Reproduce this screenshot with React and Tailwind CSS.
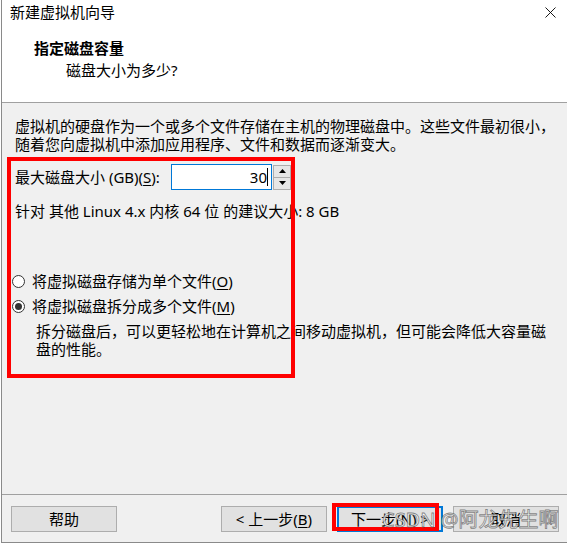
export default function App() {
  return (
    <div className="relative w-[567px] h-[545px] overflow-hidden bg-white text-[15px] text-black font-['Noto_Sans','Noto_Sans_CJK_SC',sans-serif]">
      <div className="ml-px h-[543px] flex flex-col border-l border-b border-[#8a8a8a]">
        {/* title bar */}
        <div className="h-[24px] flex items-center justify-between pl-[8px] pr-[11px] bg-white">
          <span className="leading-[18px]">新建虚拟机向导</span>
          <svg width="11" height="11" viewBox="0 0 11 11">
            <path d="M0.5 0.5 L10.5 10.5 M10.5 0.5 L0.5 10.5" stroke="#000" strokeWidth="0.9" />
          </svg>
        </div>

        {/* header */}
        <div className="h-[79px] bg-white border-b border-[#a0a0a0] pl-[32px] pt-[15px]">
          <div className="font-bold leading-[18px]">指定磁盘容量</div>
          <div className="pl-[32px] mt-[4px] leading-[18px]">磁盘大小为多少?</div>
        </div>

        {/* body */}
        <div className="h-[392px] bg-[#f0f0f0] border-b border-[#a0a0a0] pl-[13px] pt-[14px]">
          <p className="w-[548px] leading-[18px]">
            虚拟机的硬盘作为一个或多个文件存储在主机的物理磁盘中。这些文件最初很小，随着您向虚拟机中添加应用程序、文件和数据而逐渐变大。
          </p>

          <div className="mt-[11px] flex items-center h-[26px]">
            <span className="w-[156px] leading-[18px]">
              最大磁盘大小 (GB)(<u className="underline-offset-2">S</u>):
            </span>
            <div className="w-[101px] h-[26px] flex items-center justify-end pr-[3px] bg-white border border-[#0078d7]">
              <span className="leading-[18px]">30</span>
              <span className="w-px h-[18px] bg-black" />
            </div>
            <div className="ml-px w-[18px] h-[25px] flex flex-col">
              <div className="flex-1 flex items-center justify-center bg-[#e6e6e6] border border-[#adadad]">
                <svg width="7" height="4" viewBox="0 0 7 4">
                  <path d="M3.5 0 L7 4 L0 4 Z" fill="#000" />
                </svg>
              </div>
              <div className="flex-1 flex items-center justify-center bg-[#e6e6e6] border border-t-0 border-[#adadad]">
                <svg width="7" height="4" viewBox="0 0 7 4">
                  <path d="M0 0 L7 0 L3.5 4 Z" fill="#000" />
                </svg>
              </div>
            </div>
          </div>

          <div className="mt-[12px] leading-[18px]">针对 其他 Linux 4.x 内核 64 位 的建议大小: 8 GB</div>

          <div className="mt-[51px] -ml-[3px] flex items-center h-[20px]">
            <span className="w-[13px] h-[13px] rounded-full border border-[#333] bg-white" />
            <span className="ml-[7px] leading-[18px]">
              将虚拟磁盘存储为单个文件(<u className="underline-offset-2">O</u>)
            </span>
          </div>

          <div className="mt-[5px] -ml-[3px] flex items-center h-[20px]">
            <span className="w-[13px] h-[13px] rounded-full border border-[#333] bg-white flex items-center justify-center">
              <span className="w-[7px] h-[7px] rounded-full bg-[#333]" />
            </span>
            <span className="ml-[7px] leading-[18px]">
              将虚拟磁盘拆分成多个文件(<u className="underline-offset-2">M</u>)
            </span>
          </div>

          <p className="mt-[6px] ml-[21px] w-[518px] leading-[18px]">
            拆分磁盘后，可以更轻松地在计算机之间移动虚拟机，但可能会降低大容量磁盘的性能。
          </p>
        </div>

        {/* footer */}
        <div className="flex-1 bg-[#f0f0f0] flex items-start pt-[11px] pl-[9px] pr-[8px]">
          <button className="w-[106px] h-[26px] bg-[#e1e1e1] border border-[#adadad] leading-[18px]">帮助</button>
          <div className="flex-1" />
          <div className="flex gap-[10px]">
            <button className="w-[106px] h-[26px] bg-[#e1e1e1] border border-[#adadad] leading-[18px]">
              &lt; 上一步(<u className="underline-offset-2">B</u>)
            </button>
            <button className="w-[106px] h-[26px] bg-[#e1e1e1] border-2 border-[#0078d7] leading-[18px]">
              下一步(<u className="underline-offset-2">N</u>) &gt;
            </button>
            <button className="w-[106px] h-[26px] bg-[#e1e1e1] border border-[#adadad] leading-[18px]">取消</button>
          </div>
        </div>
      </div>

      {/* red annotation boxes */}
      <div className="absolute left-[7px] top-[157px] w-[288px] h-[221px] border-4 border-[#ff0000]" />
      <div className="absolute left-[332px] top-[503px] w-[107px] h-[28px] border-4 border-[#ff0000]" />

      {/* watermark */}
      <div className="absolute left-[382px] top-[507px] text-[20px] leading-[26px] text-white/80 [-webkit-text-stroke:0.8px_rgba(90,90,90,0.75)]">
        CSDN @阿龙先生啊
      </div>
    </div>
  );
}
